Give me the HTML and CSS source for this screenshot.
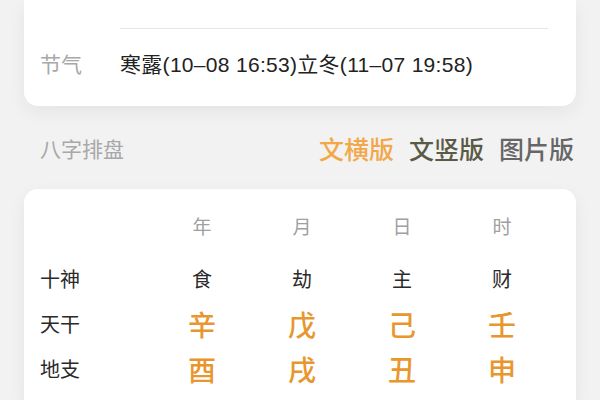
FILE: index.html
```html
<!DOCTYPE html>
<html lang="zh-CN">
<head>
<meta charset="utf-8">
<link rel="stylesheet" href="styles.css">
</head>
<body>
<div class="page">
  <section class="card info-card">
    <div class="info-top"></div>
    <div class="info-row">
      <span class="info-label">节气</span>
      <span class="info-value">寒露(10–08 16:53)立冬(11–07 19:58)</span>
    </div>
  </section>

  <div class="section-head">
    <span class="section-title">八字排盘</span>
    <div class="tabs">
      <span class="tab tab-active">文横版</span>
      <span class="tab tab-vert">文竖版</span>
      <span class="tab tab-pic">图片版</span>
    </div>
  </div>

  <section class="card chart-card">
    <div class="grid head-row">
      <span></span>
      <span class="col-head">年</span>
      <span class="col-head">月</span>
      <span class="col-head">日</span>
      <span class="col-head">时</span>
    </div>
    <div class="grid">
      <span class="row-label">十神</span>
      <span class="cell">食</span>
      <span class="cell">劫</span>
      <span class="cell">主</span>
      <span class="cell">财</span>
    </div>
    <div class="grid">
      <span class="row-label">天干</span>
      <span class="cell stem">辛</span>
      <span class="cell stem">戊</span>
      <span class="cell stem">己</span>
      <span class="cell stem">壬</span>
    </div>
    <div class="grid">
      <span class="row-label">地支</span>
      <span class="cell stem">酉</span>
      <span class="cell stem">戌</span>
      <span class="cell stem">丑</span>
      <span class="cell stem">申</span>
    </div>
  </section>
</div>
</body>
</html>
```

FILE: styles.css
```css
html, body {
  margin: 0;
  padding: 0;
}
body {
  background: #f2f2f2;
  font-family: "Noto Sans CJK SC", "Noto Sans", sans-serif;
  color: #333;
  width: 600px;
  height: 400px;
  overflow: hidden;
}
.page {
  padding: 0 24px;
}
.card {
  background: #fff;
  box-shadow: 0 6px 18px rgba(0, 0, 0, 0.06);
}
.info-card {
  border-radius: 0 0 14px 14px;
}
.info-top {
  height: 28px;
  margin: 0 28px 0 96px;
  border-bottom: 1px solid #e6e6e6;
}
.info-row {
  height: 77px;
  display: flex;
  align-items: center;
  padding-left: 16px;
  padding-bottom: 9px;
  box-sizing: border-box;
}
.info-label {
  width: 80px;
  font-size: 21px;
  color: #a8a8a8;
}
.info-value {
  font-family: "Liberation Sans", "Noto Sans CJK SC", sans-serif;
  font-size: 21px;
  color: #222;
  letter-spacing: 0.3px;
}
.section-head {
  height: 83px;
  display: flex;
  align-items: center;
  justify-content: space-between;
  padding: 0 2px 0 16px;
}
.section-title {
  font-size: 21px;
  color: #a8a8a8;
}
.tabs {
  display: flex;
  gap: 15px;
}
.tab {
  font-size: 25px;
  font-weight: 500;
}
.tab-active {
  color: #f2a848;
}
.tab-vert {
  color: #5a5a46;
}
.tab-pic {
  color: #666;
}
.chart-card {
  border-radius: 14px;
  padding: 14px 16px 20px;
}
.grid {
  display: grid;
  grid-template-columns: 112px repeat(4, 100px);
  height: 45px;
  align-items: center;
}
.head-row {
  margin-bottom: 8px;
}
.col-head {
  text-align: center;
  font-size: 19px;
  color: #a0a0a0;
}
.row-label {
  font-size: 20px;
  color: #2a2a2a;
}
.cell {
  text-align: center;
  font-size: 20px;
  color: #2a2a2a;
}
.cell.stem {
  font-size: 28px;
  font-weight: 500;
  color: #e8962e;
}
```
